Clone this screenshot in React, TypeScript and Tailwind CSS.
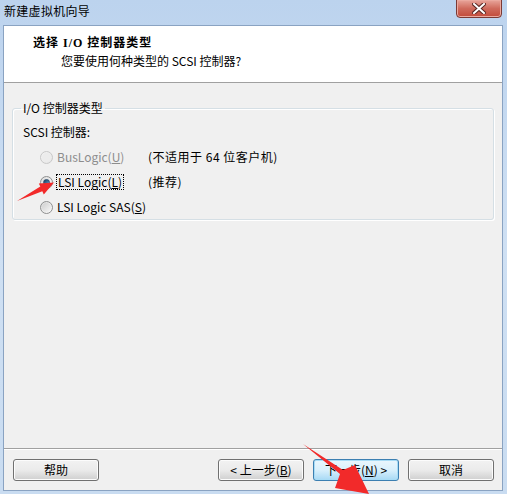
import React from "react";

const font = { fontFamily: '"Noto Sans CJK SC", "Noto Sans", sans-serif' };

function Radio({ checked, disabled }: { checked?: boolean; disabled?: boolean }) {
  return (
    <span
      className={
        "relative inline-flex h-[13px] w-[13px] shrink-0 items-center justify-center rounded-full border " +
        (disabled
          ? "border-[#c8c8c8] bg-gradient-to-br from-[#f4f4f4] to-[#e6e6e6]"
          : "border-[#8e8f8f] bg-gradient-to-br from-[#dcdcdc] to-[#fbfbfb]")
      }
    >
      {checked ? (
        <span className="h-[7px] w-[7px] rounded-full bg-gradient-to-br from-[#1c3c5c] to-[#5fa6d6] border border-[#2b4a6a]" />
      ) : (
        <span
          className={
            "h-[9px] w-[9px] rounded-full " +
            (disabled ? "bg-[#ececec]" : "bg-gradient-to-br from-[#cfcfcf] to-[#f6f6f6]")
          }
        />
      )}
    </span>
  );
}

function Btn({ children, def }: { children: React.ReactNode; def?: boolean }) {
  return (
    <div
      className={
        "flex h-[22px] w-[86px] items-center justify-center rounded-[3px] border text-[12px] text-black " +
        (def
          ? "border-[#3c7fb1] bg-gradient-to-b from-[#eaf6fd] via-[#d9f0fc] to-[#a7d9f5] shadow-[inset_0_0_0_1px_#a8dcf6]"
          : "border-[#707070] bg-gradient-to-b from-[#f2f2f2] via-[#ebebeb] to-[#cfcfcf] shadow-[inset_0_0_0_1px_#fcfcfc]")
      }
    >
      {children}
    </div>
  );
}

export default function App() {
  return (
    <div
      className="relative flex h-[494px] w-[507px] flex-col overflow-hidden bg-gradient-to-b from-[#bcd3ee] via-[#cfe0f3] to-[#c9dcf1]"
      style={font}
    >
      {/* Title bar */}
      <div className="flex h-[25px] shrink-0 items-start justify-between">
        <span className="pl-[4px] pt-[3px] text-[12px] leading-[16px] tracking-[0.3px] text-black">新建虚拟机向导</span>
        <div className="mr-[5px] flex h-[19px] w-[46px] -mt-[1px] items-center justify-center rounded-b-[4px] border border-[#7b3a35] bg-gradient-to-b from-[#e8a59b] via-[#cf6a5c] to-[#c24a3a] shadow-[inset_0_0_0_1px_#eba99f]">
          <svg width="14" height="11" viewBox="0 0 14 11">
            <path d="M2 1 L12 10 M12 1 L2 10" stroke="#5a2622" strokeWidth="4" strokeLinecap="square" />
            <path d="M2 1 L12 10 M12 1 L2 10" stroke="#ffffff" strokeWidth="2" strokeLinecap="square" />
          </svg>
        </div>
      </div>

      {/* Inner */}
      <div className="ml-[3px] flex h-[466px] w-[500px] flex-col border border-[#8aa3c2] bg-[#f0f0f0]">
        {/* Header */}
        <div className="flex h-[57px] shrink-0 flex-col border-b border-[#a0a0a0] bg-white pt-[9px]">
          <div
            className="pl-[29px] text-[12px] font-bold leading-[16px] tracking-[1px] text-black"
            style={{ fontFamily: '"Liberation Serif", "Noto Sans CJK SC", serif' }}
          >
            选择 I/O 控制器类型
          </div>
          <div className="mt-[2px] pl-[57px] text-[12px] leading-[16px] text-black">
            您要使用何种类型的 SCSI 控制器?
          </div>
        </div>

        {/* Body */}
        <div className="flex flex-1 flex-col bg-[#f0f0f0]">
          <fieldset className="mx-[8px] mt-[17px] rounded-[3px] border border-[#d5dfe5] px-[10px] pb-[4px] shadow-[inset_1px_1px_0_#ffffff,1px_1px_0_#ffffff]">
            <legend className="ml-[-2px] px-[2px] text-[12px] leading-[16px] text-black">I/O 控制器类型</legend>
            <div className="mt-[8px] text-[12px] leading-[16px] text-black">SCSI 控制器:</div>
            <div className="mt-[9px] flex h-[16px] items-center text-[12px] leading-[16px]">
              <div className="ml-[17px] flex w-[108px] items-center gap-[4px]">
                <Radio disabled />
                <span className="text-[#8d8d8d]">
                  BusLogic(<span className="underline">U</span>)
                </span>
              </div>
              <span className="tracking-[0.5px] text-black">(不适用于 64 位客户机)</span>
            </div>
            <div className="mt-[9px] flex h-[16px] items-center text-[12px] leading-[16px]">
              <div className="ml-[17px] flex w-[108px] items-center gap-[3px]">
                <Radio checked />
                <span className="border border-dotted border-black px-[1px] leading-[14px] text-black">
                  LSI Logic(<span className="underline">L</span>)
                </span>
              </div>
              <span className="tracking-[0.5px] text-black">(推荐)</span>
            </div>
            <div className="mt-[9px] flex h-[16px] items-center text-[12px] leading-[16px]">
              <div className="ml-[17px] flex items-center gap-[4px]">
                <Radio />
                <span className="text-black">
                  LSI Logic SAS(<span className="underline">S</span>)
                </span>
              </div>
            </div>
          </fieldset>

          <div className="flex-1" />

          {/* Separator */}
          <div className="h-[2px] border-t border-[#a0a0a0] bg-white" />
          {/* Buttons */}
          <div className="flex h-[40px] items-start pl-[9px] pr-[8px] pt-[9px]">
            <Btn>帮助</Btn>
            <div className="flex-1" />
            <div className="flex gap-[9px]">
              <Btn>
                &lt; 上一步(<span className="underline">B</span>)
              </Btn>
              <Btn def>
                下一步(<span className="underline">N</span>) &gt;
              </Btn>
              <Btn>取消</Btn>
            </div>
          </div>
        </div>
      </div>

      {/* Annotation arrows */}
      <svg className="pointer-events-none absolute left-0 top-0" width="507" height="494" viewBox="0 0 507 494">
        <polygon points="17,201 40.3,186.6 38.8,183.4 54,182.5 43.8,194.4 42.3,191.2" fill="#f22a2a" />
        <polygon points="303,444 343,470 355,465 369,494 335,488 340,474" fill="#f22a2a" />
      </svg>
    </div>
  );
}
